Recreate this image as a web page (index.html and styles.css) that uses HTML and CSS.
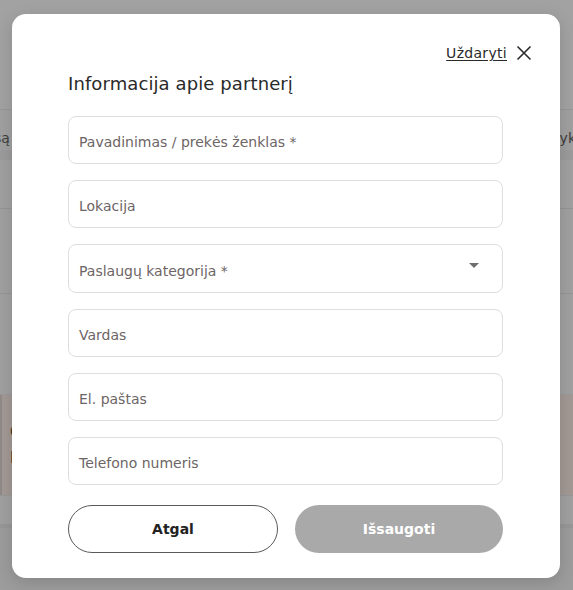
FILE: index.html
```html
<!DOCTYPE html>
<html lang="lt">
<head>
<meta charset="utf-8">
<title>Informacija apie partnerį</title>
<link rel="stylesheet" href="styles.css">
</head>
<body>
<div class="page">
  <div class="bg-top"></div>
  <div class="bg-row"><span class="bg-l">są</span><span class="bg-r">yk</span></div>
  <div class="bg-strip"></div>
  <div class="bg-a"></div>
  <div class="bg-b"></div>
  <div class="bg-c"></div>
  <div class="bg-card"><div class="bg-card-in"><span>C</span><span>I</span></div></div>
  <div class="bg-d"></div>
  <div class="bg-bottom"></div>
</div>

<div class="modal">
  <div class="modal-head">
    <a class="close" href="#">Uždaryti</a>
    <svg class="close-x" width="16" height="16" viewBox="0 0 16 16"><path d="M1.5 1.5 L14.5 14.5 M14.5 1.5 L1.5 14.5" stroke="#2a2a2a" stroke-width="1.6" fill="none"/></svg>
  </div>
  <h2 class="title">Informacija apie partnerį</h2>
  <form class="form">
    <div class="field">Pavadinimas / prekės ženklas *</div>
    <div class="field">Lokacija</div>
    <div class="field select">Paslaugų kategorija *<span class="caret"></span></div>
    <div class="field">Vardas</div>
    <div class="field">El. paštas</div>
    <div class="field">Telefono numeris</div>
    <div class="actions">
      <button type="button" class="btn back">Atgal</button>
      <button type="button" class="btn save">Išsaugoti</button>
    </div>
  </form>
</div>
</body>
</html>
```
FILE: styles.css
```css
html, body {
  margin: 0;
  padding: 0;
}
body {
  width: 573px;
  height: 590px;
  overflow: hidden;
  background: #9d9d9d;
  font-family: "DejaVu Sans", "Noto Sans", sans-serif;
}
.page {
  display: flex;
  flex-direction: column;
  height: 590px;
  overflow: hidden;
}
.bg-top { height: 109px; flex: none; background: #a2a2a2; border-bottom: 1px solid #979797; }
.bg-row {
  height: 40px;
  flex: none;
  background: #a0a0a0;
  display: flex;
  justify-content: space-between;
  align-items: flex-end;
  font-size: 14px;
  color: #3c3c3c;
  padding-bottom: 4px;
  box-sizing: border-box;
}
.bg-l { margin-left: -6px; }
.bg-r { margin-right: -3px; }
.bg-strip { height: 10px; flex: none; background: #9b9b9b; }
.bg-a { height: 48px; flex: none; background: #a0a0a0; border-bottom: 1px solid #959595; }
.bg-b { height: 84px; flex: none; background: #a0a0a0; border-bottom: 1px solid #959595; }
.bg-c { height: 100px; flex: none; background: #a0a0a0; border-bottom: 1px solid #9a9a9a; }
.bg-card { height: 100px; flex: none; background: #a29995; border-bottom: 1px solid #989898; }
.bg-card-in {
  height: 100%;
  border-left: 2px solid #8f8a88;
  display: flex;
  flex-direction: column;
  justify-content: center;
  gap: 8px;
  padding-left: 8px;
  color: #4a3a30;
  font-size: 15px;
  font-weight: bold;
}
.bg-d { height: 28px; flex: none; background: #a0a0a0; border-bottom: 4px solid #979797; }
.bg-bottom { flex: 1; background: #9c9c9c; }

.modal {
  position: absolute;
  left: 12px;
  top: 14px;
  width: 548px;
  height: 564px;
  box-sizing: border-box;
  background: #fff;
  border-radius: 14px;
  box-shadow: 0 4px 16px rgba(0,0,0,0.15);
  padding: 30px 28px 0 56px;
}
.modal-head {
  display: flex;
  justify-content: flex-end;
  align-items: center;
  gap: 9px;
  height: 18px;
}
.close {
  color: #2a2a2a;
  font-size: 14px;
  text-decoration: underline;
  text-underline-offset: 2px;
  letter-spacing: 0.3px;
}
.close-x { display: block; }
.title {
  margin: 10px 0 0 0;
  font-size: 18px;
  font-weight: 500;
  color: #2a2a2a;
  letter-spacing: 0.1px;
  line-height: 24px;
}
.form {
  margin-top: 20px;
  display: flex;
  flex-direction: column;
  gap: 16px;
  width: 435px;
}
.field {
  height: 48px;
  box-sizing: border-box;
  border: 1px solid #dedede;
  border-radius: 8px;
  padding: 4px 10px 0 10px;
  display: flex;
  align-items: center;
  font-size: 14px;
  color: #6d6565;
  letter-spacing: 0;
}
.select {
  height: 49px;
  position: relative;
}
.caret {
  position: absolute;
  right: 23px;
  top: 18px;
  width: 0;
  height: 0;
  border-left: 5px solid transparent;
  border-right: 5px solid transparent;
  border-top: 5px solid #6e6e6e;
}
.actions {
  display: flex;
  gap: 17px;
  margin-top: 4px;
}
.btn {
  height: 48px;
  border-radius: 24px;
  font-family: inherit;
  font-size: 14px;
  font-weight: bold;
  letter-spacing: 0;
  padding-top: 1px;
}
.back {
  width: 210px;
  background: #fff;
  border: 1px solid #5a5a5a;
  color: #222;
}
.save {
  width: 208px;
  background: #a9a9a9;
  border: none;
  color: #fff;
}
```
